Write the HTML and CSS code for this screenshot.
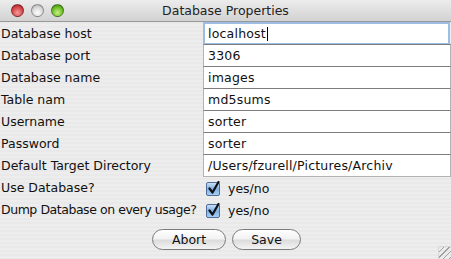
FILE: index.html
```html
<!DOCTYPE html>
<html lang="en">

<head>
    <meta charset="UTF-8">
    <title>Database Properties</title>
    <link rel="stylesheet" href="styles.css">
</head>

<body>
    <div class="window">
        <div class="titlebar">
            <div class="lights">
                <span class="light red"></span>
                <span class="light gray"></span>
                <span class="light green"></span>
            </div>
            <div class="title">Database Properties</div>
        </div>

        <div class="form">
            <div class="label">Database host</div>
            <div class="field focus">localhost<span class="caret"></span></div>

            <div class="label">Database port</div>
            <div class="field">3306</div>

            <div class="label">Database name</div>
            <div class="field">images</div>

            <div class="label">Table nam</div>
            <div class="field">md5sums</div>

            <div class="label">Username</div>
            <div class="field">sorter</div>

            <div class="label">Password</div>
            <div class="field">sorter</div>

            <div class="label">Default Target Directory</div>
            <div class="field">/Users/fzurell/Pictures/Archiv</div>

            <div class="label">Use Database?</div>
            <div class="check">
                <svg width="15" height="15" viewBox="0 0 15 15">
                    <defs>
                        <linearGradient id="cb" x1="0" y1="0" x2="0" y2="1">
                            <stop offset="0" stop-color="#cfe3f7"/>
                            <stop offset="0.5" stop-color="#7fb0e4"/>
                            <stop offset="1" stop-color="#a9d0f5"/>
                        </linearGradient>
                    </defs>
                    <rect x="0.5" y="1.5" width="13" height="13" rx="1.5" fill="url(#cb)" stroke="#4f6f9a"/>
                    <path d="M3.5 7.5 L6.5 11.5 L12.5 1" fill="none" stroke="#111" stroke-width="2.2" stroke-linecap="round" stroke-linejoin="round"/>
                </svg>
                <span>yes/no</span>
            </div>

            <div class="label tight">Dump Database on every usage?</div>
            <div class="check">
                <svg width="15" height="15" viewBox="0 0 15 15">
                    <rect x="0.5" y="1.5" width="13" height="13" rx="1.5" fill="url(#cb)" stroke="#4f6f9a"/>
                    <path d="M3.5 7.5 L6.5 11.5 L12.5 1" fill="none" stroke="#111" stroke-width="2.2" stroke-linecap="round" stroke-linejoin="round"/>
                </svg>
                <span>yes/no</span>
            </div>
        </div>

        <div class="buttons">
            <a href="#" class="btn abort">Abort</a>
            <a href="#" class="btn save">Save</a>
        </div>

        <div class="grip"></div>
    </div>
</body>

</html>
```

FILE: styles.css
```css
* {
    box-sizing: border-box;
}
body {
    margin: 0;
    font-family: "DejaVu Sans", "Liberation Sans", sans-serif;
    font-size: 12px;
    color: #111;
}
.window {
    position: relative;
    width: 451px;
    height: 259px;
    overflow: hidden;
    background: repeating-linear-gradient(to bottom, #ededed 0, #ededed 2px, #e9e9e9 2px, #e9e9e9 4px);
}

/*--------------------------*/
.titlebar {
    height: 22px;
    display: flex;
    align-items: center;
    background: linear-gradient(to bottom, #ececec, #d2d2d2);
    border-bottom: 1px solid #999;
    position: relative;
}
.lights {
    display: flex;
    gap: 7px;
    padding-left: 11px;
}
.light {
    width: 13px;
    height: 13px;
    border-radius: 50%;
    border: 1px solid rgba(0, 0, 0, .35);
}
.light.red {
    background: radial-gradient(circle at 50% 70%, #f29c9c 0, #d6484b 55%, #a3181c 100%);
}
.light.gray {
    background: radial-gradient(circle at 50% 70%, #ffffff 0, #d9d9d9 55%, #a9a9a9 100%);
}
.light.green {
    background: radial-gradient(circle at 50% 70%, #c8f08a 0, #6fbf28 55%, #3c7d0f 100%);
}
.title {
    position: absolute;
    left: 0;
    right: 0;
    text-align: center;
    font-size: 12.5px;
    color: #222;
}

/*--------------------------*/
.form {
    display: grid;
    grid-template-columns: 203px 1fr;
    grid-auto-rows: 22px;
}
.label {
    display: flex;
    align-items: center;
    padding-left: 1px;
    white-space: nowrap;
    font-size: 12.5px;
}
.label.tight {
    letter-spacing: -.45px;
}
.field {
    display: flex;
    align-items: center;
    background: #fff;
    border: 1px solid #b3b3b3;
    border-top-color: #7d7d7d;
    margin-bottom: -1px;
    padding-left: 4px;
    font-size: 12.5px;
    letter-spacing: .2px;
}
.field.focus {
    border: 2px solid #9dbde4;
    margin-right: 1px;
    padding-left: 3px;
}
.caret {
    width: 1px;
    height: 14px;
    background: #000;
    margin-left: 1px;
}
.check {
    display: flex;
    align-items: center;
    gap: 7px;
    padding-top: 2px;
    padding-left: 3px;
    font-size: 12.5px;
}

/*--------------------------*/
.buttons {
    display: flex;
    justify-content: center;
    gap: 6px;
    padding: 9px 0 0 2px;
}
.btn {
    display: flex;
    align-items: center;
    justify-content: center;
    height: 21px;
    border-radius: 11px;
    border: 1px solid #7a7a7a;
    background: linear-gradient(to bottom, #ffffff 0%, #f2f2f2 45%, #dcdcdc 55%, #f4f4f4 100%);
    color: #111;
    text-decoration: none;
    font-size: 12.5px;
}
.btn.abort {
    width: 74px;
}
.btn.save {
    width: 69px;
}

.grip {
    position: absolute;
    right: 0;
    bottom: 0;
    width: 13px;
    height: 13px;
    border-left: 1px solid #d8d8d8;
    border-top: 1px solid #d8d8d8;
    background: repeating-linear-gradient(135deg, transparent 0, transparent 3px, #a0a0a0 3px, #a0a0a0 4px);
}
```
